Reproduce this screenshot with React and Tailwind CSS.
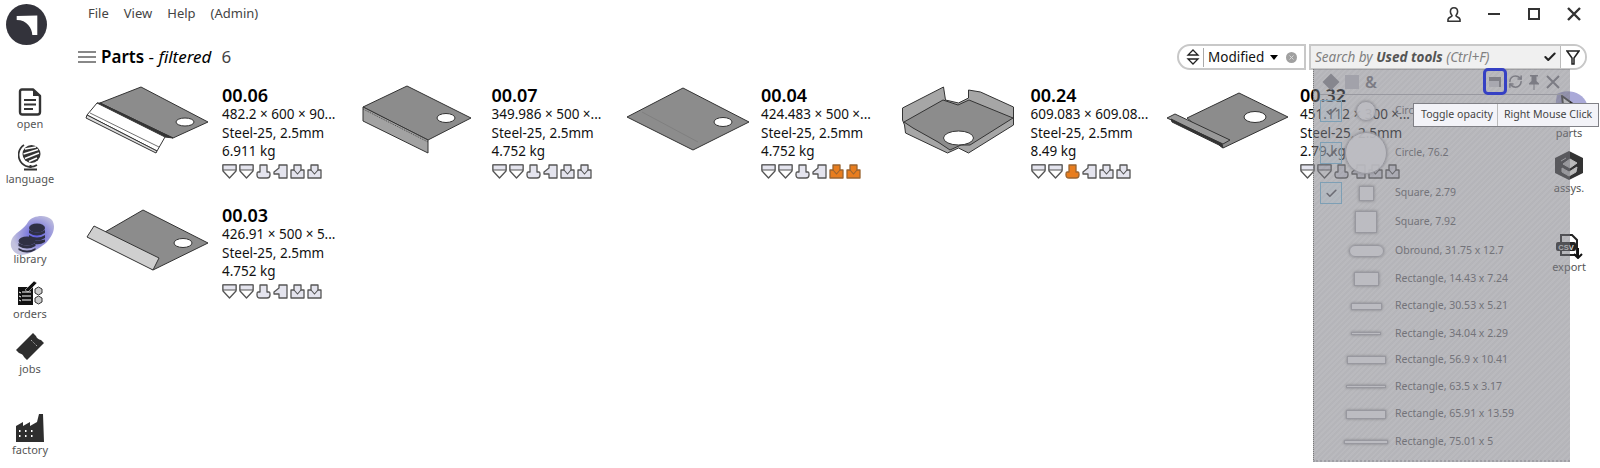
import { RefreshCw, Check } from 'lucide-react';

const parts = [
  { name: '00.06', dims: '482.2 × 600 × 90...', weight: '6.911 kg', shape: 'a', orange: [] },
  { name: '00.07', dims: '349.986 × 500 ×...', weight: '4.752 kg', shape: 'b', orange: [] },
  { name: '00.04', dims: '424.483 × 500 ×...', weight: '4.752 kg', shape: 'c', orange: [4, 5] },
  { name: '00.24', dims: '609.083 × 609.08...', weight: '8.49 kg', shape: 'd', orange: [2] },
  { name: '00.32', dims: '451.112 × 300 ×...', weight: '2.79 kg', shape: 'e', orange: [] },
  { name: '00.03', dims: '426.91 × 500 × 5...', weight: '4.752 kg', shape: 'f', orange: [] },
];

// label, outline classes, row height, has a ticked box
const tools = [
  ['Circ', 'w-[20px] h-[20px] rounded-full', 32, true],
  ['Circle, 76.2', 'w-[42px] h-[42px] rounded-full', 52, true],
  ['Square, 2.79', 'w-[15px] h-[15px]', 28, true],
  ['Square, 7.92', 'w-[22px] h-[22px]', 30, false],
  ['Obround, 31.75 x 12.7', 'w-[35px] h-[12px] rounded-full', 28, false],
  ['Rectangle, 14.43 x 7.24', 'w-[25px] h-[14px]', 27, false],
  ['Rectangle, 30.53 x 5.21', 'w-[31px] h-[7px]', 28, false],
  ['Rectangle, 34.04 x 2.29', 'w-[30px] h-[3px]', 27, false],
  ['Rectangle, 56.9 x 10.41', 'w-[39px] h-[8px]', 26, false],
  ['Rectangle, 63.5 x 3.17', 'w-[40px] h-[3px]', 27, false],
  ['Rectangle, 65.91 x 13.59', 'w-[40px] h-[9px]', 28, false],
  ['Rectangle, 75.01 x 5', 'w-[44px] h-[4px]', 27, false],
];

function PartShape({ shape }) {
  const grey = '#8c8c8c';
  return (
    <svg width="130" height="80" viewBox="0 0 130 80" stroke="#333" strokeWidth="1" strokeLinejoin="round">
      {shape === 'a' && (
        <g>
          <path d="M16 19 L57 3 L124 38 L89 54 Z" fill={grey} />
          <path d="M13 19 L16 19 L89 54 L81 53 Z" fill="#333" />
          <path d="M3 31 L13 19 L81 53 L73 67 Z" fill="#fff" />
          <path d="M3 31 L2 34 L72 69 L73 67 Z" fill="#ddd" />
          <path d="M6 29 L75 63" fill="none" strokeWidth="0.7" />
          <ellipse cx="101" cy="38" rx="9" ry="4" fill="#fff" />
        </g>
      )}
      {shape === 'b' && (
        <g>
          <path d="M9 23 L53 2 L117 34 L74 56 Z" fill={grey} />
          <path d="M9 23 L74 56 L74 69 L9 37 Z" fill="#a2a2a2" />
          <path d="M9 25 L74 58" fill="none" strokeDasharray="1 1" strokeWidth="0.8" />
          <ellipse cx="92" cy="34" rx="9" ry="4.5" fill="#fff" />
        </g>
      )}
      {shape === 'c' && (
        <g>
          <path d="M4 33 L60 4 L126 38 L70 66 Z" fill={grey} />
          <path d="M19 28 L75 58" stroke="#777" strokeWidth="0.6" fill="none" />
          <ellipse cx="100" cy="38" rx="9" ry="4.5" fill="#fff" />
        </g>
      )}
      {shape === 'd' && (
        <g>
          <path d="M9.5 24 L50.5 3 L52.5 16 L65.5 19 L75.5 14 L75.5 6 L87.5 8 L120.5 23 L120.5 41 L75.5 69 L65.5 64 L54.5 69 L12.5 49 L11.5 41 L9.5 36 Z" fill="#a6a6a6" />
          <path d="M11 38 L50 16 L65 21 L76 16 L120 34 L77 61 L68 61 L57 66 L45 58 L20 44 Z" fill={grey} />
          <ellipse cx="65.5" cy="54" rx="15" ry="7" fill="#fff" />
        </g>
      )}
      {shape === 'e' && (
        <g>
          <path d="M25 34 L77 9 L126 33 L61 64 Z" fill={grey} />
          <path d="M5 34 L13 30 L68 56 L61 60 Z" fill="#999" />
          <path d="M10 38 L57 61 L61 64 L60 60 L9 35 Z" fill="#333" />
          <ellipse cx="93" cy="33" rx="11" ry="5.5" fill="#fff" />
        </g>
      )}
      {shape === 'f' && (
        <g>
          <path d="M21 28 L59 6 L124 39 L69 66 Z" fill={grey} />
          <path d="M3 33 L10 22 L75 54 L69 66 Z" fill="#cfcfcf" />
          <ellipse cx="99" cy="39" rx="9" ry="4.5" fill="#fff" />
        </g>
      )}
    </svg>
  );
}

// small bend direction icons under each part
function BendIcon({ type, orange }) {
  const fill = orange ? '#e87d1e' : '#e4e4ee';
  const stroke = orange ? '#9a6430' : '#555';
  if (type < 2) {
    return (
      <svg width="15" height="15" viewBox="0 0 15 15" className="shrink-0">
        <path d="M1 1 H14 V7 L7.5 14 L1 7 Z" fill="#fff" stroke={stroke} strokeWidth="1.3" strokeLinejoin="round" />
        <path d="M1 1 H14 V6 H1 Z" fill={fill} stroke={stroke} strokeWidth="1.1" />
      </svg>
    );
  }
  if (type === 2) {
    return (
      <svg width="15" height="15" viewBox="0 0 15 15" className="shrink-0">
        <path d="M4 1 H11 V8 H13 Q14 8 14 10 V11 Q14 14 11 14 H4 Q1 14 1 11 V10 Q1 8 2 8 H4 Z" fill={fill} stroke={stroke} strokeWidth="1.3" strokeLinejoin="round" />
      </svg>
    );
  }
  if (type === 3) {
    return (
      <svg width="15" height="15" viewBox="0 0 15 15" className="shrink-0">
        <path d="M6 1 H14 V14 H6 V10 H1 V8 L6 4 Z" fill={fill} stroke={stroke} strokeWidth="1.3" strokeLinejoin="round" />
      </svg>
    );
  }
  return (
    <svg width="15" height="15" viewBox="0 0 15 15" className="shrink-0">
      <path d="M4 1 H11 V6 H14 V14 H1 V6 H4 Z" fill={fill} stroke={stroke} strokeWidth="1.3" strokeLinejoin="round" />
      <path d="M4 6 L7.5 10 L11 6" fill="none" stroke={stroke} strokeWidth="1.1" />
    </svg>
  );
}

function PartCard({ part }) {
  return (
    <div className="flex w-[269.5px] h-[120px]">
      <div className="w-[146px] pl-[8px] shrink-0">
        <PartShape shape={part.shape} />
      </div>
      <div className="flex flex-col">
        <div className="text-[18px] leading-[22px] font-semibold text-black">{part.name}</div>
        <div className="text-[13.5px] leading-[18.5px] -mt-[1px] whitespace-nowrap">{part.dims}</div>
        <div className="text-[13.5px] leading-[18.5px] whitespace-nowrap">Steel-25, 2.5mm</div>
        <div className="text-[13.5px] leading-[18.5px] whitespace-nowrap">{part.weight}</div>
        <div className="flex gap-[2px] mt-[3px]">
          {[0, 1, 2, 3, 4, 5].map((t) => (
            <BendIcon key={t} type={t} orange={part.orange.includes(t)} />
          ))}
        </div>
      </div>
    </div>
  );
}

function SideItem({ label, icon, className, labelClass }) {
  return (
    <div className={`flex flex-col items-center gap-[1px] w-[60px] text-[11px] leading-[14px] text-[#555] ${className || ''}`}>
      {icon}
      <span className={labelClass}>{label}</span>
    </div>
  );
}

const logo = (
  <svg width="41" height="41" viewBox="0 0 41 41" className="-ml-[7px] shrink-0">
    <circle cx="20.5" cy="20.5" r="20.5" fill="#33333b" />
    <path d="M10.7 12 L31.3 11.5 V31 H26.3 C26 24 21 16 10.7 16 Z" fill="#fff" />
  </svg>
);

const openIcon = (
  <svg width="24" height="28" viewBox="0 0 24 28">
    <path d="M4 1.5 H15 L22 8 V24 Q22 26.5 19.5 26.5 H4.5 Q2 26.5 2 24 V3.5 Q2 1.5 4 1.5 Z" fill="#fff" stroke="#333" strokeWidth="2.4" strokeLinejoin="round" />
    <path d="M15 1.5 L22 8 H15 Z" fill="#333" />
    <path d="M6 12 H18 M6 16.5 H18 M6 21 H15" stroke="#333" strokeWidth="2.2" />
  </svg>
);

const globeIcon = (
  <svg width="24" height="28" viewBox="0 0 24 28">
    <circle cx="13.5" cy="11" r="9" fill="#333" />
    <path d="M7 6 L18 4 M5.5 11 L20 6.5 M7 15.5 L21 10 M11 18.5 L19 15" stroke="#fff" strokeWidth="1.5" />
    <path d="M6 2 A11.5 11.5 0 0 0 19 22" fill="none" stroke="#333" strokeWidth="1.7" />
    <path d="M12.5 22 V25 M6 26.5 H19" stroke="#333" strokeWidth="2" />
  </svg>
);

const libraryIcon = (
  <svg width="44" height="40" viewBox="0 0 44 40" className="ml-[4px]">
    <defs>
      <radialGradient id="libraryGlow" cx="0.58" cy="0.48" r="0.55">
        <stop offset="0" stopColor="#5a58e0" />
        <stop offset="0.6" stopColor="#9a98dc" />
        <stop offset="1" stopColor="#c3c2de" />
      </radialGradient>
    </defs>
    <path d="M3 22 C8 16 14 14 18 7 C23 0 36 -1 42 5 C46 11 44 20 36 28 C28 34 20 40 10 40 C2 38 -2 30 3 22 Z" fill="url(#libraryGlow)" />
    <g fill="#2f3044">
      <ellipse cx="27" cy="13" rx="8" ry="4.5" />
      <path d="M19 15 Q27 20 35 15 V18 Q27 23 19 18 Z M19 20 Q27 25 35 20 V23 Q27 28 19 23 Z M24 25.5 Q30 26 35 24.5 V27 Q30 30 25 29 Z" />
      <ellipse cx="17" cy="26" rx="8.5" ry="4.5" />
      <path d="M8.5 28 Q17 33 25.5 28 V31 Q17 36 8.5 31 Z M8.5 33 Q17 38 25.5 33 V35 Q17 40 8.5 35 Z" />
    </g>
  </svg>
);

const ordersIcon = (
  <svg width="26" height="26" viewBox="0 0 26 26">
    <path d="M1 7 H16 V25 H1 Z" fill="#111" />
    <path d="M8 10 L17 1 L20 3 L11 12 Z" fill="#111" stroke="#fff" strokeWidth="0.5" />
    <path d="M5 12 H14 M5 16 H14 M5 20 H14 M2 12 L4 13 M2 16 L4 17 M2 20 L4 21" stroke="#fff" strokeWidth="1" />
    <path d="M18 9 L21.5 7 L25 9 V13 L21.5 15 L18 13 Z M18 18 L21.5 16 L25 18 V22 L21.5 24 L18 22 Z" fill="#ccc" stroke="#333" />
  </svg>
);

const jobsIcon = (
  <svg width="28" height="28" viewBox="0 0 28 28">
    <path d="M0 17 L17 0 L20 3 Q21 6 25 7 L28 10 L11 27 L8 24 Q7 21 3 20 Z" fill="#2e2e2e" />
    <path d="M15 7 L21 13" stroke="#fff" strokeDasharray="1 1.5" strokeWidth="0.8" />
  </svg>
);

const factoryIcon = (
  <svg width="28" height="28" viewBox="0 0 28 28">
    <path d="M0 28 V12 L7 8 V12 L14 8 V12 L21 8 L23 0 H27 L28 28 Z" fill="#2e2e2e" />
    <path d="M3 17 H6 M9 17 H12 M15 17 H18 M3 22 H6 M9 22 H12 M15 22 H18" stroke="#fff" strokeWidth="2" strokeDasharray="1.5 1.5" />
  </svg>
);

const partsIcon = (
  <svg width="40" height="35" viewBox="0 0 40 35">
    <path d="M8 4 C18 -2 34 2 38 14 C40 26 30 34 18 34 C10 32 6 28 6 18 Z" fill="#aaa9d8" />
    <path d="M13 6 L28 17 L15 24 Z" fill="#fff" stroke="#333" strokeWidth="2" strokeLinejoin="round" />
  </svg>
);

const assysIcon = (
  <svg width="28" height="29" viewBox="0 0 28 29">
    <path d="M14 0 L28 7 V22 L14 29 L0 22 V7 Z" fill="#333" />
    <path d="M8 13 L15 8 L22 12 L15 17 Z M6 10 L11 7 M7 17 L14 21 L22 16 L21 21 L14 25 L7 21 Z" fill="#bbb" stroke="#bbb" />
  </svg>
);

const exportIcon = (
  <svg width="28" height="25" viewBox="0 0 28 25">
    <path d="M6 1 H17 L22 6 V21 H6 Z" fill="#fff" stroke="#222" strokeWidth="2" />
    <rect x="1" y="8" width="20" height="9" rx="2" fill="#222" />
    <text x="11" y="15.5" textAnchor="middle" fontSize="7.5" fontWeight="700" fill="#ddd" fontFamily="Liberation Sans">CSV</text>
    <path d="M23 14 V23 M19 20 L23 24 L27 20" fill="none" stroke="#111" strokeWidth="2" />
  </svg>
);

function TickBox() {
  return (
    <div className="w-[22px] h-[22px] border border-[#7d9fb5] bg-[#a9b8c8]/30 flex items-center justify-center shrink-0">
      <Check size={13} strokeWidth={3} className="text-[#6d6d75]" />
    </div>
  );
}

export default function App() {
  return (
    <div className="relative w-[1600px] h-[468px] overflow-hidden bg-white flex font-['Noto_Sans','Open_Sans',sans-serif] text-[#111]">
      {/* left rail */}
      <div className="w-[60px] flex flex-col items-center shrink-0 pt-[4px]">
        {logo}
        <SideItem label="open" icon={openIcon} className="mt-[43px]" />
        <SideItem label="language" icon={globeIcon} className="mt-[12px]" />
        <SideItem label="library" icon={libraryIcon} className="mt-[29px]" labelClass="-mt-[4px]" />
        <SideItem label="orders" icon={ordersIcon} className="mt-[14px]" />
        <SideItem label="jobs" icon={jobsIcon} className="mt-[12px]" />
        <SideItem label="factory" icon={factoryIcon} className="mt-[38px]" />
      </div>

      {/* main area */}
      <div className="flex-1 min-w-0 flex flex-col">
        <div className="flex items-center h-[28px] pl-[28px] gap-[15px] text-[13px] text-[#444]">
          <span>File</span>
          <span>View</span>
          <span>Help</span>
          <span>(Admin)</span>
          <div className="ml-auto flex items-center pr-[6px]">
            <div className="w-[40px] flex justify-center">
              <svg width="16" height="19" viewBox="0 0 20 20">
                <path d="M10 1.5 C6.5 1.5 5.5 4 5.5 6.5 C5.5 9 7 10.5 7.5 11.5 C7.5 13 3 13.5 2.5 16 V18.5 H17.5 V16 C17 13.5 12.5 13 12.5 11.5 C13 10.5 14.5 9 14.5 6.5 C14.5 4 13.5 1.5 10 1.5 Z" fill="none" stroke="#333" strokeWidth="2" />
              </svg>
            </div>
            <div className="w-[40px] flex justify-center">
              <div className="w-[12px] h-[2.5px] bg-[#333]" />
            </div>
            <div className="w-[40px] flex justify-center">
              <div className="w-[12px] h-[12px] border-[2.5px] border-[#333]" />
            </div>
            <div className="w-[40px] flex justify-center">
              <svg width="14" height="14" viewBox="0 0 14 14"><path d="M1 1 L13 13 M13 1 L1 13" stroke="#333" strokeWidth="2.4" /></svg>
            </div>
          </div>
        </div>

        <div className="flex items-center h-[28px] mt-[15px] pl-[18px] pr-[13px]">
          <div className="flex flex-col gap-[3px] w-[18px]">
            <div className="h-[2px] bg-[#888]" />
            <div className="h-[2px] bg-[#888]" />
            <div className="h-[2px] bg-[#888]" />
          </div>
          <div className="ml-[5px] text-[17px] text-black whitespace-nowrap">
            <span className="font-semibold">Parts</span> - <em>filtered</em>
            <span className="ml-[10px] text-[#444]">6</span>
          </div>

          <div className="ml-auto flex h-[26px] text-[13.5px]">
            <div className="flex items-center h-full w-[129px] border-2 border-[#c8c8c8] rounded-l-full bg-white pl-[7px]">
              <svg width="14" height="16" viewBox="0 0 14 16" className="shrink-0">
                <path d="M7 1 L12 6 H2 Z" fill="none" stroke="#222" strokeWidth="1.3" />
                <path d="M2 10 H12 L7 15 Z" fill="#fff" stroke="#222" strokeWidth="1.3" />
              </svg>
              <div className="w-px h-[19px] bg-[#aaa] ml-[3px] mr-[4px]" />
              <span>Modified</span>
              <span className="ml-[6px] border-x-[4px] border-x-transparent border-t-[5px] border-t-black" />
              <span className="ml-[8px] w-[11px] h-[11px] rounded-full bg-[#a0a0a0] flex items-center justify-center">
                <svg width="5" height="5" viewBox="0 0 5 5"><path d="M0.5 0.5 L4.5 4.5 M4.5 0.5 L0.5 4.5" stroke="#ddd" strokeWidth="0.9" /></svg>
              </span>
            </div>
            <div className="flex items-center h-full w-[278px] ml-[3px] border-2 border-[#c8c8c8] rounded-r-full bg-[#f0f0f0] pl-[4px]">
              <span className="italic text-[#808080] whitespace-nowrap">
                Search by <b className="text-[#555]">Used tools</b> (Ctrl+F)
              </span>
              <Check size={14} strokeWidth={3.5} className="ml-auto mr-[3px] text-[#222]" />
              <div className="h-full w-[25px] bg-white rounded-r-full border-l border-[#bbb] flex items-center justify-center">
                <svg width="14" height="15" viewBox="0 0 14 15"><path d="M1 1 H13 L8 8 V14 H6 V8 Z" fill="none" stroke="#222" strokeWidth="1.5" /></svg>
              </div>
            </div>
          </div>
        </div>

        <div className="flex flex-1 min-h-0 mt-[13px]">
          <div className="flex-1 min-w-0 flex flex-wrap content-start pl-[16px]">
            {parts.map((p) => (
              <PartCard key={p.name} part={p} />
            ))}
          </div>
          {/* right rail */}
          <div className="w-[60px] mr-[1px] shrink-0 flex flex-col items-center pt-[6px]">
            <SideItem label="parts" icon={partsIcon} />
            <SideItem label="assys." icon={assysIcon} className="mt-[11px]" />
            <SideItem label="export" icon={exportIcon} className="mt-[39px]" />
          </div>
        </div>
      </div>

      {/* translucent tools panel */}
      <div className="absolute left-[1313px] top-[69px] w-[257px] h-[393px] bg-[repeating-linear-gradient(135deg,rgba(120,120,128,0.55)_0px,rgba(120,120,128,0.55)_2px,rgba(124,124,132,0.53)_2px,rgba(124,124,132,0.53)_4px)] border-l border-dotted border-l-[#777] border-b-2 border-b-[#a0a0a6] pl-[6px] pr-[7px] text-[#737379]">
        <div className="flex items-center h-[26px] border-b border-[#98989f] text-[#7c7c84]">
          <div className="w-[12px] h-[12px] ml-[5px] rotate-45 bg-[#86868e]" />
          <div className="w-[14px] h-[14px] ml-[8px] bg-[#a2a2aa]" />
          <span className="ml-[6px] text-[16px] font-semibold">&amp;</span>
          <div className="ml-auto flex items-center pr-[2px]">
            <div className="w-[24px] h-[27px] border-[3px] border-[#3540c4] rounded-[5px] flex items-center justify-center">
              <div className="w-[12px] h-[10px] bg-[#a8a8b0] border-t-[4px] border-r-[2px] border-[#808088]" />
            </div>
            <div className="w-[16px] flex justify-center"><RefreshCw size={15} strokeWidth={2.4} /></div>
            <div className="w-[16px] ml-[3px] flex justify-center">
              <svg width="12" height="16" viewBox="0 0 12 16" fill="#7c7c84">
                <path d="M2 1 H10 V2.5 H8.5 V7 L11 9.5 V10.5 H1 V9.5 L3.5 7 V2.5 H2 Z M5.5 10.5 H6.5 V16 H5.5 Z" />
              </svg>
            </div>
            <div className="w-[16px] ml-[3px] flex justify-center">
              <svg width="14" height="14" viewBox="0 0 14 14"><path d="M1 1 L13 13 M13 1 L1 13" stroke="#7c7c84" strokeWidth="2" /></svg>
            </div>
          </div>
        </div>
        {tools.map(([label, shape, h, ticked]) => (
          <div key={label} className="flex items-center text-[10.5px]" style={{ height: h }}>
            <div className="w-[22px] shrink-0">{ticked && <TickBox />}</div>
            <div className="w-[48px] flex justify-center shrink-0">
              <div className={`${shape} border border-[#98989f] bg-[#bcbcc2]/90 shadow-[0_0_3px_#808086]`} />
            </div>
            <span className="ml-[5px] whitespace-nowrap">{label}</span>
          </div>
        ))}
      </div>

      {/* tooltip */}
      <div className="absolute left-[1413px] top-[103px] h-[24px] flex items-center whitespace-nowrap bg-[#f3f3f8] border border-[#808086] text-[10.6px] text-[#444]">
        <span className="pl-[7px] pr-[4px]">Toggle opacity</span>
        <span className="pl-[6px] pr-[6px] h-full flex items-center border-l border-[#bbb]">Right Mouse Click</span>
      </div>
    </div>
  );
}
